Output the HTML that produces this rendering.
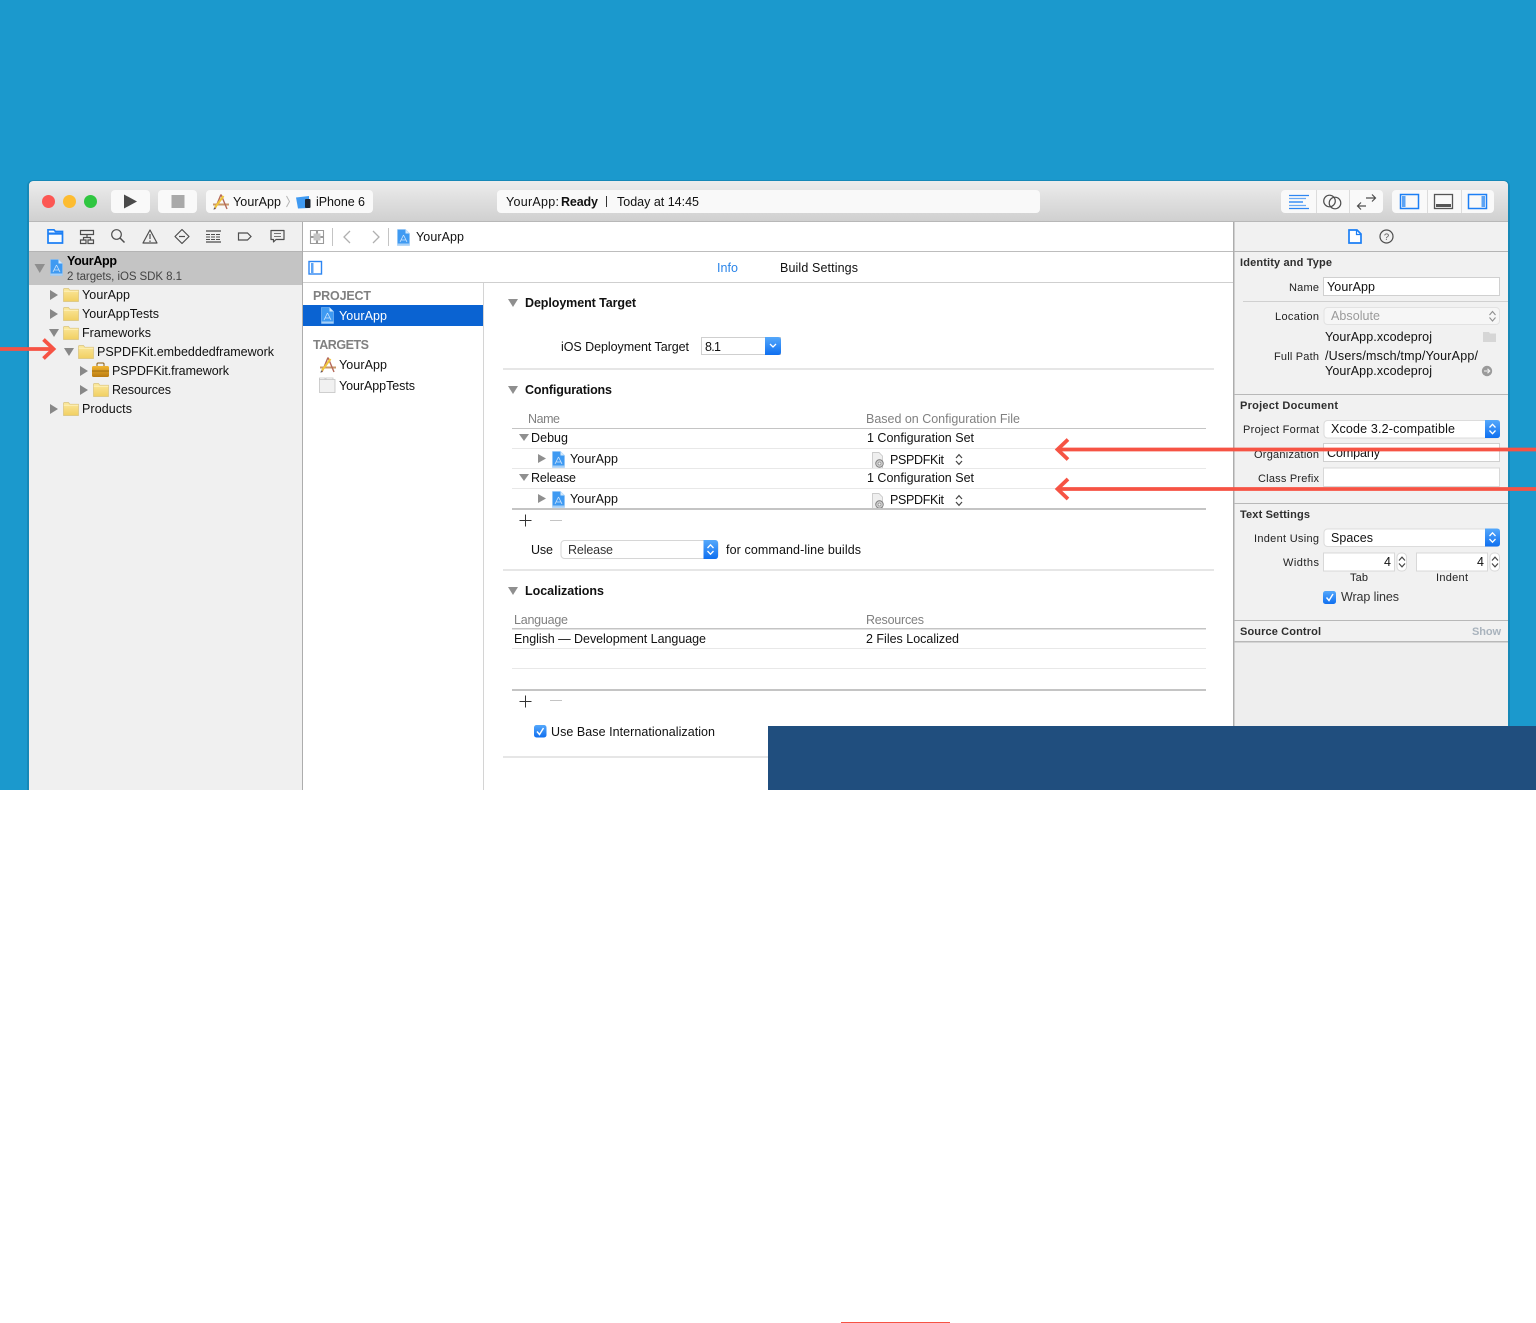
<!DOCTYPE html>
<html><head><meta charset="utf-8"><title>Xcode project</title>
<style>
html,body{margin:0;padding:0;background:#fff}
svg{display:block}
#soft{filter:blur(.35px)}
text{font-family:"Liberation Sans",sans-serif;font-size:12.5px;fill:#111}
.b{font-weight:bold}
.s{font-size:11px;fill:#222}
.h{font-size:11px;font-weight:bold;fill:#2e2e2e}
.g{fill:#808080}
.pg{font-weight:bold;fill:#808080}
.l{fill:none;stroke:#4e4e4e;stroke-width:1.2}
.u{fill:none;stroke:#1c7ff5;stroke-width:1.5}
</style></head><body>
<svg width="1536" height="1323" viewBox="0 0 1536 1323" xmlns="http://www.w3.org/2000/svg">
<defs>
<linearGradient id="tb" x1="0" y1="0" x2="0" y2="1"><stop offset="0" stop-color="#ececec"/><stop offset="1" stop-color="#d0d0d0"/></linearGradient>
<linearGradient id="fo" x1="0" y1="0" x2="0" y2="1"><stop offset="0" stop-color="#fbe89c"/><stop offset="1" stop-color="#f1cf62"/></linearGradient>
<linearGradient id="bb" x1="0" y1="0" x2="0" y2="1"><stop offset="0" stop-color="#55a8fb"/><stop offset="1" stop-color="#0f6ff0"/></linearGradient>
<linearGradient id="tk" x1="0" y1="0" x2="0" y2="1"><stop offset="0" stop-color="#f2b632"/><stop offset="1" stop-color="#b97a10"/></linearGradient>
<symbol id="folder" viewBox="0 0 16 14" width="16" height="14"><path d="M0.5 3V1.3Q0.5 .5 1.3 .5H5.5L6.8 2.2H15.5V13.5H.5Z" fill="url(#fo)" stroke="#d8c27e" stroke-width=".7"/><path d="M.8 3.2H15.2" stroke="#fff5c8" stroke-width=".8"/></symbol>
<symbol id="proj" viewBox="0 0 13 17" width="13" height="17"><path d="M.5.5H8.5L12.5 4.5V16.5H.5Z" fill="#3f9af2" stroke="#8cc2f5" stroke-width=".6"/><path d="M8.5.5V4.5H12.5Z" fill="#d5e9fb"/><path d="M6.5 6L3 13M6.5 6L10 13M4 11H9" stroke="#cfe5fb" stroke-width=".8" fill="none"/><rect x=".5" y="14.5" width="12" height="2" fill="#a7d0f7"/></symbol>
<symbol id="app" viewBox="0 0 18 17" width="18" height="17"><path d="M1 10.5H17V12.5H1Z" fill="#c9986a"/><path d="M9 1.5L3 16M9 1.5L15 16" stroke="#b56a5a" stroke-width="1.4" fill="none"/><path d="M11.5 3L3 14.5" stroke="#f0c63a" stroke-width="2"/><path d="M3 14.5L1.8 16.5" stroke="#555" stroke-width="1"/></symbol>
<symbol id="cfg" viewBox="0 0 14 17" width="14" height="17"><path d="M1.5.5H8L11.5 4V16.5H1.5Z" fill="#efefef" stroke="#bdbdbd" stroke-width=".7"/><circle cx="8.5" cy="11.5" r="3.8" fill="#c9c9c9" stroke="#777" stroke-width=".8"/><circle cx="8.5" cy="11.5" r="1.5" fill="#f2f2f2" stroke="#777" stroke-width=".5"/></symbol>
<symbol id="updn" viewBox="0 0 8 13" width="8" height="13"><path d="M1 5L4 1.6L7 5M1 8L4 11.4L7 8" fill="none" stroke="#444" stroke-width="1.2"/></symbol>
<symbol id="updnw" viewBox="0 0 8 13" width="8" height="13"><path d="M1 5L4 1.8L7 5M1 8L4 11.2L7 8" fill="none" stroke="#fff" stroke-width="1.3"/></symbol>
</defs>

<!-- page -->
<rect width="1536" height="1323" fill="#fff"/>
<rect width="1536" height="790" fill="#1b99cd"/>

<g id="soft">
<!-- window -->
<path d="M27 800V187Q27 180 34 180H1503Q1510 180 1510 187V800Z" fill="#137aa6" opacity=".55"/>
<path d="M29 800V186Q29 181 34 181H1503Q1508 181 1508 186V800Z" fill="#f0f0f0"/>
<path d="M29 221V186Q29 181 34 181H1503Q1508 181 1508 186V221Z" fill="url(#tb)"/>
<rect x="29" y="221" width="1479" height="1" fill="#b8b8b8"/>

<!-- traffic lights -->
<circle cx="48.500" cy="201.500" r="6.500" fill="#fc5753"/>
<circle cx="69.500" cy="201.500" r="6.500" fill="#fdbc30"/>
<circle cx="90.500" cy="201.500" r="6.500" fill="#2fc640"/>

<!-- toolbar buttons -->
<g fill="#f9f9f9">
<rect x="111" y="190" width="39" height="23" rx="4"/>
<rect x="158" y="190" width="39" height="23" rx="4"/>
<rect x="206" y="190" width="167" height="23" rx="4"/>
<rect x="497" y="190" width="543" height="23" rx="4"/>
<rect x="1281" y="190" width="102" height="23" rx="4"/>
<rect x="1392" y="190" width="102" height="23" rx="4"/>
</g>
<path d="M124 194.500V208.500L137 201.500Z" fill="#4a4a4a"/>
<rect x="171.500" y="195" width="13" height="13" fill="#a9a9a9"/>
<use href="#app" x="212" y="193"/>
<text x="233" y="206" textLength="48">YourApp</text>
<path d="M286.500 196L289.500 201.500L286.500 207" fill="none" stroke="#b5b5b5"/>
<path d="M296 197.500L309 196V208L298 208.500Z" fill="#3f9af2"/><rect x="305" y="199" width="5.500" height="9" rx="1" fill="#1c2430"/>
<text x="316" y="206" textLength="49">iPhone 6</text>
<text x="506" y="206" textLength="53">YourApp:</text>
<text x="561" y="206" class="b" textLength="37">Ready</text>
<rect x="606" y="196" width="1" height="11" fill="#333"/>
<text x="617" y="206" textLength="82">Today at 14:45</text>

<g fill="#dcdcdc"><rect x="1316" y="190" width="1" height="23"/><rect x="1349" y="190" width="1" height="23"/><rect x="1427" y="190" width="1" height="23"/><rect x="1461" y="190" width="1" height="23"/></g>
<g stroke="#2d86f2" stroke-width="1.300"><path d="M1289 195.500H1309M1289 208.500H1309"/><path d="M1289 198.500H1306M1289 205.500H1306" stroke="#6aaaf6"/><path d="M1289 202H1303" stroke="#6aaaf6" stroke-width="2"/></g>
<circle cx="1329.500" cy="201" r="5.800" class="l"/><circle cx="1335" cy="203" r="5.800" class="l"/>
<path d="M1358 206H1366M1361 202.500L1357.500 206L1361 209.500M1366 198H1375M1372 194.500L1375.500 198L1372 201.500" class="l"/>
<rect x="1400.500" y="194.500" width="18" height="14" class="u"/><rect x="1402" y="196" width="3.500" height="11" fill="#5ca3f4"/>
<rect x="1434.500" y="194.500" width="18" height="14" fill="none" stroke="#555" stroke-width="1.300"/><rect x="1436" y="204" width="15" height="3" fill="#555"/>
<rect x="1468.500" y="194.500" width="18" height="14" class="u"/><rect x="1481.500" y="196" width="3.500" height="11" fill="#5ca3f4"/>

<!-- navigator -->
<rect x="29" y="222" width="273" height="568" fill="#f0f0f0"/>
<rect x="29" y="251" width="273" height="1" fill="#b4b4b4"/>
<rect x="29" y="252" width="273" height="33" fill="#c4c4c4"/>
<rect x="302" y="222" width="1" height="568" fill="#adadad"/>
<!-- navigator icons -->
<path d="M48 231V229.800H54L55.500 231.500H62.500V243H48Z" fill="#f6fbff" stroke="#1c7ff5" stroke-width="1.700"/><rect x="48" y="232.500" width="14.500" height="2.200" fill="#1c7ff5"/>
<path d="M80.500 230.500H93.500V234.500H80.500ZM87 234.500V237.500M83.500 240V237.500H90.500V240M80.500 240H86V243.500H80.500ZM88 240H93.500V243.500H88Z" class="l"/>
<circle cx="116.500" cy="234.500" r="4.800" class="l"/><path d="M120 238L124.500 242.500" class="l" style="stroke-width:1.500"/>
<path d="M150 230L157 243H143Z" class="l" stroke-linejoin="round"/><path d="M150 234V239M150 240.500V242" class="l"/>
<path d="M182 229.500L189 236.500L182 243.500L175 236.500Z" class="l" stroke-linejoin="round"/><path d="M179 236.500H185" class="l"/>
<path d="M206 231H221M206 242H221" class="l"/>
<path d="M206 234.500H221M206 237H221M206 239.500H221" fill="none" stroke="#4e4e4e" stroke-width="1" stroke-dasharray="4 1"/>
<path d="M238.500 233H247.500L251 236.500L247.500 240H238.500Z" class="l"/>
<path d="M271 230.500H284V239.500H276L273.500 242V239.500H271Z" class="l" stroke-linejoin="round"/><path d="M274 233.500H281M274 236.500H281" class="l" style="stroke-width:.8"/>

<path d="M34.500 264H45L39.750 273Z" fill="#8f8f8f"/>
<use href="#proj" x="50" y="259"/>
<text x="67" y="265" class="b" textLength="50" style="fill:#000">YourApp</text>
<text x="67" y="280" textLength="115" style="font-size:11.500px;fill:#444">2 targets, iOS SDK 8.1</text>

<g fill="#888">
<path d="M50 290V300L58 295Z"/><path d="M50 309V319L58 314Z"/>
<path d="M49 329H59L54 337Z"/>
<path d="M64 348H74L69 356Z"/>
<path d="M80 366V376L88 371Z"/><path d="M80 385V395L88 390Z"/>
<path d="M50 404V414L58 409Z"/>
</g>
<use href="#folder" x="63" y="288"/><use href="#folder" x="63" y="307"/><use href="#folder" x="63" y="326"/>
<use href="#folder" x="78" y="345"/><use href="#folder" x="93" y="383"/><use href="#folder" x="63" y="402"/>
<path d="M97 366V364Q97 363 98 363H103Q104 363 104 364V366" fill="none" stroke="#8a5a08" stroke-width="1"/>
<rect x="92" y="366" width="17" height="11" rx="1.500" fill="url(#tk)"/><path d="M92 371H109" stroke="#8a5a08" stroke-width=".8"/>
<text x="82" y="299" textLength="48">YourApp</text>
<text x="82" y="318" textLength="77">YourAppTests</text>
<text x="82" y="337" textLength="69">Frameworks</text>
<text x="97" y="356" textLength="177">PSPDFKit.embeddedframework</text>
<text x="112" y="375" textLength="117">PSPDFKit.framework</text>
<text x="112" y="394" textLength="59">Resources</text>
<text x="82" y="413" textLength="50">Products</text>

<!-- editor -->
<rect x="303" y="222" width="930" height="568" fill="#fff"/>
<rect x="303" y="251" width="930" height="1" fill="#bdbdbd"/>
<rect x="303" y="282" width="930" height="1" fill="#cfcfcf"/>
<rect x="483" y="283" width="1" height="507" fill="#d4d4d4"/>
<!-- jump bar -->
<path d="M310.500 230.500H316.500V236.500H310.500ZM317.500 230.500H323.500V236.500H317.500ZM310.500 237.500H316.500V243.500H310.500ZM317.500 237.500H323.500V243.500H317.500Z" fill="none" stroke="#9a9a9a" stroke-width="1.100"/><rect x="313.500" y="233.500" width="7" height="7" fill="#c4c4c4"/>
<rect x="332" y="228" width="1" height="18" fill="#c4c4c4"/>
<path d="M350 231L344 237L350 243" fill="none" stroke="#b0b0b0" stroke-width="1.300"/>
<path d="M373 231L379 237L373 243" fill="none" stroke="#b0b0b0" stroke-width="1.300"/>
<rect x="388" y="228" width="1" height="18" fill="#c4c4c4"/>
<use href="#proj" x="397" y="229"/>
<text x="416" y="241" textLength="48">YourApp</text>
<!-- tabs -->
<rect x="309" y="261.500" width="12.500" height="12.500" fill="#fff" stroke="#2d86f2" stroke-width="1.400"/><rect x="311" y="263" width="2.500" height="10" fill="#5ca3f4"/>
<text x="717" y="272" textLength="21" style="fill:#2a84e8">Info</text>
<text x="780" y="272" textLength="78">Build Settings</text>
<!-- project list -->
<text x="313" y="300" class="pg" textLength="58">PROJECT</text>
<rect x="303" y="305" width="180" height="21" fill="#0a63d2"/>
<use href="#proj" x="321" y="307"/>
<text x="339" y="320" textLength="48" style="fill:#fff">YourApp</text>
<text x="313" y="349" class="pg" textLength="56">TARGETS</text>
<use href="#app" x="319" y="356"/>
<text x="339" y="369" textLength="48">YourApp</text>
<path d="M319.500 380V378H325V380M326 380V378H333V380" fill="none" stroke="#c4c4c4" stroke-width=".8"/>
<rect x="319.500" y="379.500" width="15.500" height="13" fill="#f1f1f1" stroke="#c4c4c4" stroke-width=".8"/>
<text x="339" y="390" textLength="76">YourAppTests</text>

<!-- content -->
<g fill="#8f8f8f">
<path d="M508 299H518L513 307Z"/><path d="M508 386H518L513 394Z"/><path d="M508 587H518L513 595Z"/>
<path d="M519 434H529L524 441Z"/><path d="M519 474H529L524 481Z"/>
<path d="M538 454V463L546 458.500Z"/><path d="M538 494V503L546 498.500Z"/>
</g>
<text x="525" y="307" class="b" textLength="111">Deployment Target</text>
<text x="561" y="351" textLength="128">iOS Deployment Target</text>
<rect x="701.500" y="337.500" width="79" height="17" fill="#fff" stroke="#cfcfcf"/>
<text x="705" y="351" textLength="16">8.1</text>
<path d="M765 337H778Q781 337 781 340V352Q781 355 778 355H765Z" fill="url(#bb)"/>
<path d="M770 344L773 347L776 344" fill="none" stroke="#fff" stroke-width="1.300"/>
<rect x="503" y="368" width="711" height="2" fill="#e6e6e6"/>
<text x="525" y="394" class="b" textLength="87">Configurations</text>
<text x="528" y="423" class="g" textLength="32">Name</text>
<text x="866" y="423" class="g" textLength="154">Based on Configuration File</text>
<rect x="512" y="428" width="694" height="1" fill="#c4c4c4"/>
<text x="531" y="442" textLength="37">Debug</text>
<text x="867" y="442" textLength="107">1 Configuration Set</text>
<rect x="512" y="448" width="694" height="1" fill="#e8e8e8"/>
<use href="#proj" x="552" y="451"/>
<text x="570" y="463" textLength="48">YourApp</text>
<use href="#cfg" x="871" y="452"/>
<text x="890" y="464" textLength="54">PSPDFKit</text>
<use href="#updn" x="955" y="453"/>
<rect x="512" y="468" width="694" height="1" fill="#e8e8e8"/>
<text x="531" y="482" textLength="45">Release</text>
<text x="867" y="482" textLength="107">1 Configuration Set</text>
<rect x="512" y="488" width="694" height="1" fill="#e8e8e8"/>
<use href="#proj" x="552" y="491"/>
<text x="570" y="503" textLength="48">YourApp</text>
<use href="#cfg" x="871" y="493"/>
<text x="890" y="504" textLength="54">PSPDFKit</text>
<use href="#updn" x="955" y="494"/>
<rect x="512" y="508" width="694" height="2" fill="#c4c4c4"/>
<path d="M519.500 520.500H531.500M525.500 514.500V526.500" stroke="#333" stroke-width="1"/>
<path d="M550 520.500H562" stroke="#c4c4c4" stroke-width="1"/>
<text x="531" y="554" textLength="22">Use</text>
<rect x="561" y="540.500" width="157" height="18" rx="3.500" fill="#fff" stroke="#d6d6d6"/>
<text x="568" y="554" textLength="45" style="fill:#333">Release</text>
<path d="M703.500 540H715Q718 540 718 543V556Q718 559 715 559H703.500Z" fill="url(#bb)"/>
<use href="#updnw" x="706.500" y="543"/>
<text x="726" y="554" textLength="135">for command-line builds</text>
<rect x="503" y="569" width="711" height="2" fill="#e6e6e6"/>
<text x="525" y="595" class="b" textLength="79">Localizations</text>
<text x="514" y="624" class="g" textLength="54">Language</text>
<text x="866" y="624" class="g" textLength="58">Resources</text>
<rect x="512" y="628" width="694" height="1.500" fill="#c4c4c4"/>
<text x="514" y="643" textLength="192">English — Development Language</text>
<text x="866" y="643" textLength="93">2 Files Localized</text>
<rect x="512" y="648" width="694" height="1" fill="#e8e8e8"/>
<rect x="512" y="668" width="694" height="1" fill="#e8e8e8"/>
<rect x="512" y="689" width="694" height="2" fill="#c4c4c4"/>
<path d="M519.500 701.500H531.500M525.500 695.500V707.500" stroke="#333" stroke-width="1"/>
<path d="M550 700.500H562" stroke="#c4c4c4" stroke-width="1"/>
<rect x="534" y="725" width="12.500" height="12.500" rx="2.500" fill="url(#bb)"/>
<path d="M537 731.500L539.500 734.500L543.500 728" fill="none" stroke="#fff" stroke-width="1.400"/>
<text x="551" y="736" textLength="164">Use Base Internationalization</text>
<rect x="503" y="756" width="711" height="2" fill="#e6e6e6"/>

<!-- inspector -->
<rect x="1233" y="222" width="275" height="568" fill="#f1f1f1"/>
<rect x="1233" y="222" width="1.500" height="568" fill="#adadad"/>
<rect x="1234" y="251" width="274" height="1" fill="#b4b4b4"/>
<path d="M1349 230H1357L1361 234V243H1349Z" fill="#fff" stroke="#1c7ff5" stroke-width="1.700"/><path d="M1356.500 230V234.500H1361" fill="none" stroke="#1c7ff5" stroke-width="1.200"/>
<circle cx="1386.500" cy="236.500" r="6.500" class="l"/>
<text x="1386.500" y="240" text-anchor="middle" style="font-size:9.500px;fill:#555">?</text>

<text x="1240" y="266" class="h" textLength="92">Identity and Type</text>
<text x="1289" y="291" class="s" textLength="30">Name</text>
<rect x="1323.500" y="277.500" width="176" height="18" fill="#fff" stroke="#d0d0d0"/>
<text x="1327" y="291" textLength="48">YourApp</text>
<rect x="1243" y="301" width="265" height="1" fill="#d0d0d0"/>
<text x="1275" y="320" class="s" textLength="44">Location</text>
<rect x="1324" y="307.500" width="175.500" height="17" rx="3.500" fill="#f6f6f6" stroke="#e2e2e2"/>
<text x="1331" y="320" textLength="49" style="fill:#9a9a9a">Absolute</text>
<path d="M1489.500 315L1492.500 311.500L1495.500 315M1489.500 317.500L1492.500 321L1495.500 317.500" fill="none" stroke="#8f8f8f" stroke-width="1.100"/>
<text x="1325" y="341" textLength="107">YourApp.xcodeproj</text>
<path d="M1483 332H1489L1490 333.500H1496V342H1483Z" fill="#d6d6d6"/>
<text x="1274" y="360" class="s" textLength="45">Full Path</text>
<text x="1325" y="360" textLength="153">/Users/msch/tmp/YourApp/</text>
<text x="1325" y="375" textLength="107">YourApp.xcodeproj</text>
<circle cx="1487" cy="371" r="5.200" fill="#9a9a9a"/>
<path d="M1484 371H1489.500M1487.500 368.800L1489.800 371L1487.500 373.200" fill="none" stroke="#f1f1f1" stroke-width="1.100"/>
<rect x="1234" y="394" width="274" height="1" fill="#b8b8b8"/>

<text x="1240" y="409" class="h" textLength="98">Project Document</text>
<text x="1243" y="433" class="s" textLength="76">Project Format</text>
<rect x="1324" y="420.500" width="175.500" height="17.500" rx="3.500" fill="#fff" stroke="#dcdcdc"/>
<text x="1331" y="433" textLength="124">Xcode 3.2-compatible</text>
<path d="M1485 420H1497Q1500 420 1500 423V435Q1500 438 1497 438H1485Z" fill="url(#bb)"/>
<use href="#updnw" x="1488.500" y="422.500"/>
<rect x="1323.500" y="443.500" width="176" height="18" fill="#fff" stroke="#d0d0d0"/>
<text x="1254" y="458" class="s" textLength="65">Organization</text>
<text x="1327" y="457" textLength="53">Company</text>
<text x="1258" y="482" class="s" textLength="61">Class Prefix</text>
<rect x="1323.500" y="468" width="176" height="18.500" fill="#fff" stroke="#d8d8d8"/>
<rect x="1234" y="503" width="274" height="1" fill="#b8b8b8"/>

<text x="1240" y="518" class="h" textLength="70">Text Settings</text>
<text x="1254" y="542" class="s" textLength="65">Indent Using</text>
<rect x="1324" y="529" width="175.500" height="17.500" rx="3.500" fill="#fff" stroke="#dcdcdc"/>
<text x="1331" y="542" textLength="42">Spaces</text>
<path d="M1485 528.500H1497Q1500 528.500 1500 531.500V543.500Q1500 546.500 1497 546.500H1485Z" fill="url(#bb)"/>
<use href="#updnw" x="1488.500" y="531"/>
<text x="1283" y="566" class="s" textLength="36">Widths</text>
<rect x="1323.500" y="553" width="71" height="18" fill="#fff" stroke="#d8d8d8"/>
<text x="1384" y="566">4</text>
<rect x="1397" y="553" width="9.500" height="18" rx="4" fill="#fff" stroke="#d8d8d8"/><use href="#updn" x="1398" y="555.500"/>
<rect x="1416.500" y="553" width="71" height="18" fill="#fff" stroke="#d8d8d8"/>
<text x="1477" y="566">4</text>
<rect x="1490" y="553" width="9.500" height="18" rx="4" fill="#fff" stroke="#d8d8d8"/><use href="#updn" x="1491" y="555.500"/>
<text x="1350" y="581" class="s" textLength="18">Tab</text>
<text x="1436" y="581" class="s" textLength="32">Indent</text>
<rect x="1323" y="591" width="13" height="13" rx="2.500" fill="url(#bb)"/>
<path d="M1326.500 597.500L1329 600.500L1333 594" fill="none" stroke="#fff" stroke-width="1.400"/>
<text x="1341" y="601" textLength="58" style="fill:#333">Wrap lines</text>
<rect x="1234" y="620" width="274" height="1" fill="#b8b8b8"/>
<text x="1240" y="635" class="h" textLength="81">Source Control</text>
<text x="1472" y="635" class="h" textLength="29" style="fill:#a9b3bd">Show</text>
<rect x="1234" y="641" width="274" height="1.500" fill="#b8b8b8"/>
<rect x="1235" y="643" width="273" height="147" fill="#eeeeee"/>

<!-- arrows -->
<g fill="none" stroke="#f65344" stroke-width="3.800">
<path d="M0 349H52"/><path d="M43.500 339.500L53.500 349L43.500 358.500"/>
<path d="M1058 449.500H1540"/><path d="M1068 439.500L1057.500 449.500L1068 459.500"/>
<path d="M1058 489H1540"/><path d="M1068 479L1057.500 489L1068 499"/>
</g>
</g>

<!-- overlays -->
<rect x="768" y="726" width="768" height="64" fill="#204e7e"/>
<rect x="0" y="790" width="1536" height="533" fill="#fff"/>
<rect x="841" y="1322" width="109" height="1" fill="#f65344"/>
</svg>
</body></html>
